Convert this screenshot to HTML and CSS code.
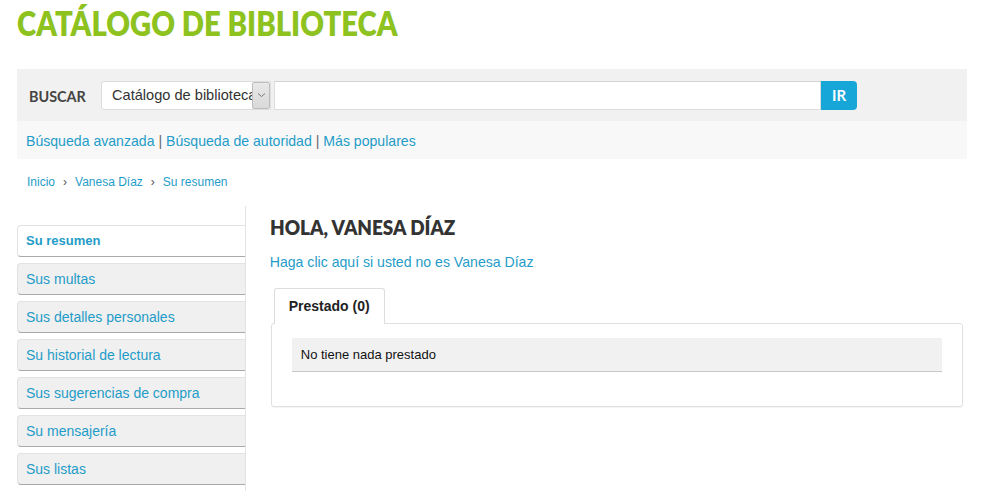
FILE: index.html
```html
<!DOCTYPE html>
<html lang="es">
<head>
<meta charset="utf-8">
<title>Catálogo de biblioteca</title>
<link rel="stylesheet" href="styles.css">
</head>
<body>
<div class="page">
  <h1 class="title">CATÁLOGO DE BIBLIOTECA</h1>
  <div class="search">
    <div class="search-row">
      <span class="search-label">BUSCAR</span>
      <div class="select">
        <span class="select-text">Catálogo de biblioteca</span>
        <span class="select-arrow"><svg width="9" height="6" viewBox="0 0 9 6"><path d="M1 1.5 L4.5 4.5 L8 1.5" fill="none" stroke="#777" stroke-width="1"/></svg></span>
      </div>
      <div class="input"></div>
      <button class="go">IR</button>
    </div>
    <div class="search-links">
      <a href="#">Búsqueda avanzada</a> | <a href="#">Búsqueda de autoridad</a> | <a href="#">Más populares</a>
    </div>
  </div>
  <nav class="crumbs">
    <a href="#">Inicio</a><span class="sep">›</span><a href="#">Vanesa Díaz</a><span class="sep">›</span><a href="#">Su resumen</a>
  </nav>
  <div class="content">
    <ul class="side">
      <li class="item active"><a href="#">Su resumen</a></li>
      <li class="item"><a href="#">Sus multas</a></li>
      <li class="item"><a href="#">Sus detalles personales</a></li>
      <li class="item"><a href="#">Su historial de lectura</a></li>
      <li class="item"><a href="#">Sus sugerencias de compra</a></li>
      <li class="item"><a href="#">Su mensajería</a></li>
      <li class="item"><a href="#">Sus listas</a></li>
    </ul>
    <main class="main">
      <h2 class="hello">HOLA, VANESA DÍAZ</h2>
      <a class="notme" href="#">Haga clic aquí si usted no es Vanesa Díaz</a>
      <div class="tabs">
        <div class="tab">Prestado (0)</div>
      </div>
      <div class="panel">
        <div class="empty">No tiene nada prestado</div>
      </div>
    </main>
  </div>
</div>
</body>
</html>
```
FILE: styles.css
```css
* { box-sizing: border-box; }
html, body { margin: 0; padding: 0; background: #fff; }
body { font-family: "Liberation Sans", Arial, sans-serif; color: #333; }
a { color: #1f9cc8; text-decoration: none; }
.page { padding: 0 16px 0 17px; }

.title {
  margin: 0;
  padding-top: 1px;
  height: 69px;
  font-family: "Lato", sans-serif;
  font-weight: 800;
  font-size: 34px;
  line-height: 44px;
  color: #8dc21f;
  transform: scaleX(0.86);
  transform-origin: left;
  white-space: nowrap;
}

.search-row {
  display: flex;
  align-items: center;
  height: 52px;
  background: #f1f1f1;
  padding: 0 12px;
}
.search-label {
  font-family: "Lato", sans-serif;
  font-weight: 700;
  font-size: 16px;
  color: #444;
  width: 72px;
  transform: scaleX(0.9);
  transform-origin: left;
}
.select {
  display: flex;
  width: 170px;
  height: 29px;
  background: #fff;
  border: 1px solid #ddd;
  border-radius: 3px 0 0 3px;
  overflow: hidden;
}
.select-text {
  flex: 1;
  font-size: 14.6px;
  line-height: 27px;
  padding-left: 10px;
  color: #333;
  white-space: nowrap;
  overflow: hidden;
}
.select-arrow {
  width: 18px;
  background: linear-gradient(#e8e8e8, #d9d9d9);
  border: 1px solid #bdbdbd;
  border-radius: 2px;
  display: flex;
  align-items: center;
  justify-content: center;
}
.input {
  margin-left: 3px;
  width: 547px;
  height: 29px;
  background: #fff;
  border: 1px solid #ddd;
  border-top-color: #d3d3d3;
}
.go {
  width: 36px;
  height: 29px;
  border: 0;
  border-radius: 0 4px 4px 0;
  background: #17a6d8;
  color: #fff;
  font-family: "Lato", sans-serif;
  font-weight: 700;
  font-size: 15px;
  padding: 0;
}
.search-links {
  height: 38px;
  background: #f8f8f8;
  padding-left: 9px;
  font-size: 14.1px;
  line-height: 40px;
  color: #666;
}

.crumbs {
  padding: 15px 0 0 10px;
  height: 47px;
  font-size: 12px;
  line-height: 17px;
}
.crumbs .sep { color: #555; margin: 0 8px; }

.content { display: flex; }
.side {
  list-style: none;
  margin: 0;
  padding: 19px 0 0;
  width: 229px;
  border-right: 1px solid #e3e3e3;
}
.item {
  height: 32px;
  margin-bottom: 6px;
  background: #f0f0f0;
  border: 1px solid #e2e2e2;
  border-right: 0;
  border-bottom: 1px solid #aaa;
  border-radius: 4px 0 0 4px;
}
.item a {
  display: block;
  padding-left: 8px;
  font-size: 14px;
  line-height: 30px;
}
.item.active { background: #fff; }
.item.active a { font-weight: 700; font-size: 13px; }

.main { margin-left: 24px; width: 698px; }
.hello {
  margin: 0;
  padding-top: 8px;
  font-family: "Lato", sans-serif;
  font-weight: 800;
  font-size: 21px;
  line-height: 26px;
  color: #333;
  transform: scaleX(0.9);
  transform-origin: left;
  white-space: nowrap;
}
.notme {
  display: block;
  margin-top: 12px;
  font-size: 14.1px;
  line-height: 20px;
}
.tabs { margin-top: 16px; padding-left: 4px; display: flex; }
.tab {
  background: #fff;
  border: 1px solid #ddd;
  border-bottom: 0;
  border-radius: 3px 3px 0 0;
  height: 36px;
  padding: 0 14px;
  font-weight: 700;
  font-size: 14px;
  line-height: 35px;
  color: #222;
  margin-bottom: -1px;
  position: relative;
}
.panel {
  width: 692px;
  margin-left: 1px;
  border: 1px solid #e0e0e0;
  border-radius: 3px;
  box-shadow: 0 1px 1px rgba(0,0,0,0.05);
  padding: 14px 20px 34px;
}
.empty {
  background: #f1f1f1;
  border-bottom: 1px solid #c9c9c9;
  height: 34px;
  padding-left: 9px;
  font-size: 13px;
  line-height: 33px;
  color: #111;
}
```
